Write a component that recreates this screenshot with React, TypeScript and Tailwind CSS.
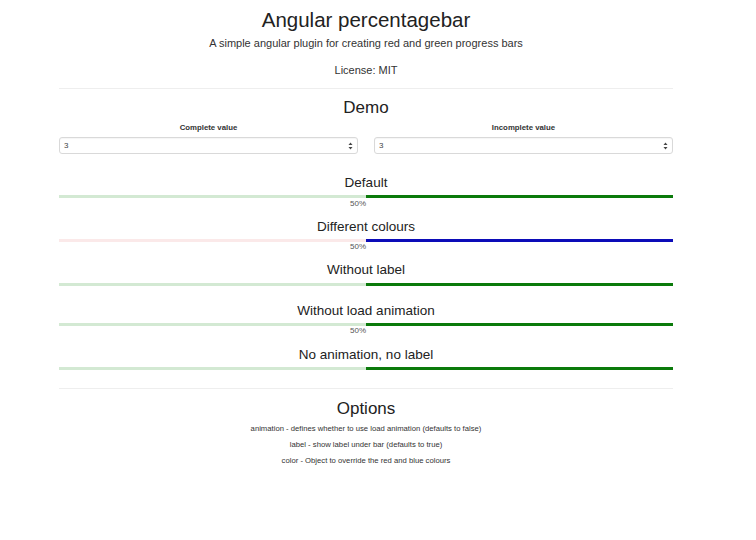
import React from 'react';

type BarProps = {
  title: string;
  light: string;
  dark: string;
  label: boolean;
  top: string;
  barTop: string;
  labelTop?: string;
};

function Bar({ title, light, dark, label, top, barTop, labelTop }: BarProps) {
  return (
    <div className={top}>
      <h3 className="text-center text-[13.5px] leading-[16px] text-[#222]">{title}</h3>
      <div className={`flex h-[3px] w-full ${barTop}`}>
        <div className={`h-full w-1/2 ${light}`} />
        <div className={`h-full w-1/2 ${dark}`} />
      </div>
      {label && (
        <div className={`flex justify-center pr-[16px] text-[8px] leading-[10px] text-[#555] ${labelTop ?? ''}`}>
          50%
        </div>
      )}
    </div>
  );
}

function Select({ caption }: { caption: string }) {
  return (
    <div>
      <div className="text-center text-[7.8px] font-bold leading-[10px] text-[#333]">{caption}</div>
      <div className="mt-[4px] flex h-[17px] items-center justify-between rounded-[3px] border border-[#d9d9d9] bg-white pl-[4px] pr-[4px] shadow-[inset_0_1px_1px_rgba(0,0,0,0.04)]">
        <span className="text-[8px] text-[#444]">3</span>
        <svg width="5" height="8" viewBox="0 0 5 8">
          <path d="M2.5 0.5 L4.5 3 L0.5 3 Z" fill="#444" />
          <path d="M2.5 7.5 L4.5 5 L0.5 5 Z" fill="#444" />
        </svg>
      </div>
    </div>
  );
}

export default function App() {
  return (
    <div className="min-h-[540px] bg-white pl-[59px] font-['Liberation_Sans',Arial,sans-serif] text-[#222]">
      <div className="w-[614px]">
        <h1 className="pt-[8px] text-center text-[20.5px] leading-[24px] text-[#222]">Angular percentagebar</h1>
        <p className="mt-[3px] text-center text-[11px] leading-[16px] text-[#333]">
          A simple angular plugin for creating red and green progress bars
        </p>
        <p className="mt-[11px] text-center text-[11px] leading-[16px] text-[#333]">License: MIT</p>
        <hr className="mt-[10px] border-t border-[#eeeeee]" />

        <h2 className="mt-[9px] text-center text-[17px] leading-[20px] text-[#222]">Demo</h2>
        <div className="mt-[5px] grid grid-cols-2 gap-4">
          <Select caption="Complete value" />
          <Select caption="Incomplete value" />
        </div>

        <Bar title="Default" light="bg-[#d3e9d3]" dark="bg-[#0b7a0b]" label top="mt-[21px]" barTop="mt-[4px]" labelTop="mt-[1px]" />
        <Bar title="Different colours" light="bg-[#fbe9e9]" dark="bg-[#0c0cb8]" label top="mt-[10px]" barTop="mt-[4px]" labelTop="mt-0" />
        <Bar title="Without label" light="bg-[#d3e9d3]" dark="bg-[#0b7a0b]" label={false} top="mt-[10px]" barTop="mt-[5px]" />
        <Bar title="Without load animation" light="bg-[#d3e9d3]" dark="bg-[#0b7a0b]" label top="mt-[17px]" barTop="mt-[4px]" labelTop="mt-0" />
        <Bar title="No animation, no label" light="bg-[#d3e9d3]" dark="bg-[#0b7a0b]" label={false} top="mt-[11px]" barTop="mt-[4px]" />

        <hr className="mt-[18px] border-t border-[#eeeeee]" />
        <h2 className="mt-[10px] text-center text-[17px] leading-[20px] text-[#222]">Options</h2>
        <div className="mt-[5px] flex flex-col items-center gap-[6px] text-[7.7px] leading-[10px] text-[#333]">
          <p>animation - defines whether to use load animation (defaults to false)</p>
          <p>label - show label under bar (defaults to true)</p>
          <p>color - Object to override the red and blue colours</p>
        </div>
      </div>
    </div>
  );
}
